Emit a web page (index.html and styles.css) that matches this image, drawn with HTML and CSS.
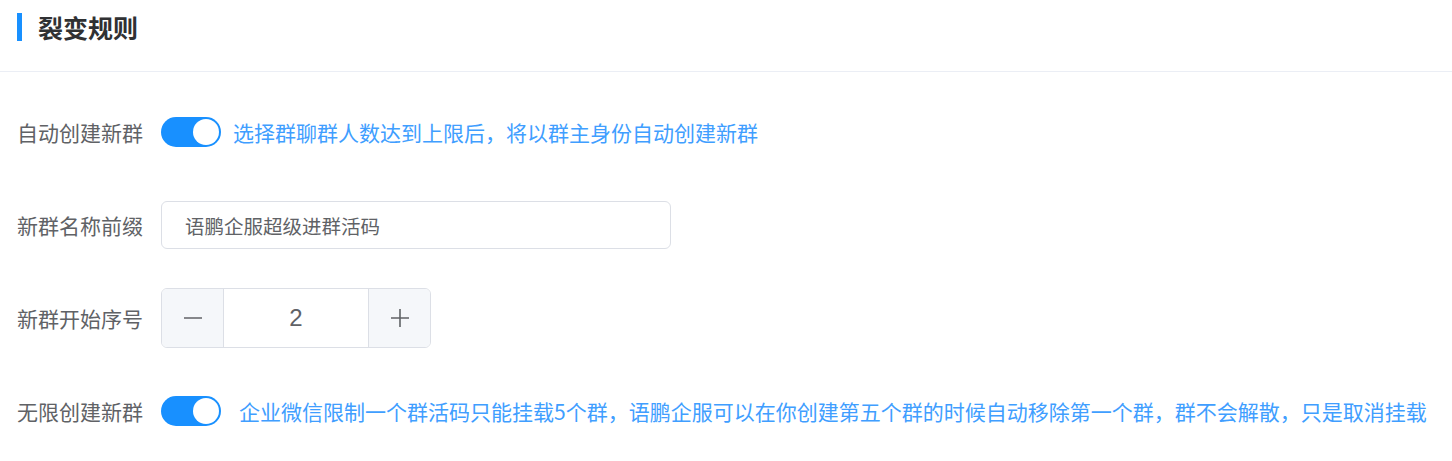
FILE: index.html
```html
<!DOCTYPE html>
<html lang="zh-CN">
<head>
<meta charset="utf-8">
<title>裂变规则</title>
<link rel="stylesheet" href="styles.css">
</head>
<body>
<div class="page">
  <div class="header">
    <span class="bar"></span>
    <h2 class="title">裂变规则</h2>
  </div>
  <div class="form">
    <div class="row">
      <label class="label">自动创建新群</label>
      <div class="control">
        <span class="switch on"><span class="knob"></span></span>
        <span class="tip">选择群聊群人数达到上限后，将以群主身份自动创建新群</span>
      </div>
    </div>
    <div class="row">
      <label class="label">新群名称前缀</label>
      <div class="control">
        <div class="input">语鹏企服超级进群活码</div>
      </div>
    </div>
    <div class="row">
      <label class="label">新群开始序号</label>
      <div class="control">
        <div class="number">
          <span class="btn minus"><svg width="20" height="20" viewBox="0 0 20 20"><path d="M1 10h18" stroke="#606266" stroke-width="1.6" fill="none"/></svg></span>
          <span class="value">2</span>
          <span class="btn plus"><svg width="20" height="20" viewBox="0 0 20 20"><path d="M1 10h18M10 1v18" stroke="#606266" stroke-width="1.6" fill="none"/></svg></span>
        </div>
      </div>
    </div>
    <div class="row">
      <label class="label">无限创建新群</label>
      <div class="control">
        <span class="switch on"><span class="knob"></span></span>
        <span class="tip tip-wide">企业微信限制一个群活码只能挂载5个群，语鹏企服可以在你创建第五个群的时候自动移除第一个群，群不会解散，只是取消挂载</span>
      </div>
    </div>
  </div>
</div>
</body>
</html>
```

FILE: styles.css
```css
* { box-sizing: border-box; }
html, body {
  margin: 0;
  padding: 0;
  background: #fff;
  font-family: "Noto Sans CJK SC", "Noto Sans", sans-serif;
}
.page { width: 1452px; }
.header {
  height: 72px;
  border-bottom: 1px solid #ebeef5;
  display: flex;
  align-items: flex-start;
  padding-left: 17px;
  padding-top: 13px;
}
.bar {
  width: 5px;
  height: 28px;
  background: #1890ff;
  flex: none;
}
.title {
  margin: 0 0 0 16px;
  font-size: 25px;
  line-height: 28px;
  font-weight: 700;
  color: #303133;
}
.form {
  padding: 30px 0 0 17px;
  display: flex;
  flex-direction: column;
  gap: 33px;
}
.row {
  height: 60px;
  display: flex;
  align-items: center;
}
.label {
  width: 144px;
  flex: none;
  font-size: 21px;
  color: #606266;
  line-height: 30px;
}
.control {
  display: flex;
  align-items: center;
}
.switch {
  width: 60px;
  height: 30px;
  border-radius: 15px;
  background: #1890ff;
  position: relative;
  flex: none;
}
.knob {
  position: absolute;
  top: 2px;
  right: 2px;
  width: 26px;
  height: 26px;
  border-radius: 50%;
  background: #fff;
}
.tip {
  margin-left: 12px;
  font-size: 21px;
  color: #409eff;
  white-space: nowrap;
  line-height: 30px;
}
.tip-wide {
  margin-left: 18px;
}
.input {
  width: 510px;
  height: 48px;
  border: 1px solid #dcdfe6;
  border-radius: 6px;
  padding-left: 23px;
  display: flex;
  align-items: center;
  font-size: 19.5px;
  color: #606266;
}
.number {
  width: 270px;
  height: 60px;
  border: 1px solid #dcdfe6;
  border-radius: 6px;
  display: flex;
  overflow: hidden;
}
.btn {
  width: 62px;
  flex: none;
  background: #f5f7fa;
  display: flex;
  align-items: center;
  justify-content: center;
}
.minus { border-right: 1px solid #dcdfe6; }
.plus { border-left: 1px solid #dcdfe6; }
.value {
  flex: 1;
  display: flex;
  align-items: center;
  justify-content: center;
  font-family: "Liberation Sans", Arial, sans-serif;
  font-size: 24px;
  color: #606266;
}
```
